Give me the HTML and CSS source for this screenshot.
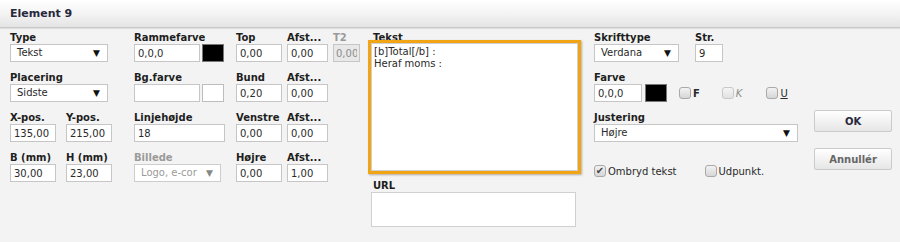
FILE: index.html
```html
<!DOCTYPE html>
<html lang="da">
<head>
  <meta charset="UTF-8">
  <title>Element 9</title>
  <link rel="stylesheet" href="styles.css">
</head>
<body>
  <div class="titlebar">Element 9</div>

  <div class="content">
    <div class="fields">
      <div class="field span2">
        <label>Type</label>
        <div class="select w97"><span>Tekst</span></div>
      </div>
      <div class="field">
        <label>Rammefarve</label>
        <div class="color-row">
          <input class="inp w66" type="text" value="0,0,0">
          <span class="swatch black"></span>
        </div>
      </div>
      <div class="field">
        <label>Top</label>
        <input class="inp w45" type="text" value="0,00">
      </div>
      <div class="field">
        <label>Afst...</label>
        <input class="inp w40" type="text" value="0,00">
      </div>
      <div class="field">
        <label class="muted">T2</label>
        <input class="inp w27 disabled" type="text" value="0,00" disabled>
      </div>

      <div class="field span2">
        <label>Placering</label>
        <div class="select w97"><span>Sidste</span></div>
      </div>
      <div class="field">
        <label>Bg.farve</label>
        <div class="color-row">
          <input class="inp w66" type="text" value="">
          <span class="swatch white"></span>
        </div>
      </div>
      <div class="field">
        <label>Bund</label>
        <input class="inp w45" type="text" value="0,20">
      </div>
      <div class="field span2">
        <label>Afst...</label>
        <input class="inp w40" type="text" value="0,00">
      </div>

      <div class="field">
        <label>X-pos.</label>
        <input class="inp w46" type="text" value="135,00">
      </div>
      <div class="field">
        <label>Y-pos.</label>
        <input class="inp w46" type="text" value="215,00">
      </div>
      <div class="field">
        <label>Linjehøjde</label>
        <input class="inp w90" type="text" value="18">
      </div>
      <div class="field">
        <label>Venstre</label>
        <input class="inp w45" type="text" value="0,00">
      </div>
      <div class="field span2">
        <label>Afst...</label>
        <input class="inp w40" type="text" value="0,00">
      </div>

      <div class="field">
        <label>B (mm)</label>
        <input class="inp w46" type="text" value="30,00">
      </div>
      <div class="field">
        <label>H (mm)</label>
        <input class="inp w46" type="text" value="23,00">
      </div>
      <div class="field">
        <label class="muted">Billede</label>
        <div class="select w86 disabled"><span>Logo, e-cor</span></div>
      </div>
      <div class="field">
        <label>Højre</label>
        <input class="inp w45" type="text" value="0,00">
      </div>
      <div class="field span2">
        <label>Afst...</label>
        <input class="inp w40" type="text" value="1,00">
      </div>
    </div>

    <div class="text-col">
      <label>Tekst</label>
      <textarea class="tekst">[b]Total[/b] :
Heraf moms :</textarea>
      <label class="url-label">URL</label>
      <input class="inp url" type="text" value="">
    </div>

    <div class="font-col">
      <div class="font-row">
        <div class="field">
          <label>Skrifttype</label>
          <div class="select w85"><span>Verdana</span></div>
        </div>
        <div class="field">
          <label>Str.</label>
          <input class="inp w28" type="text" value="9">
        </div>
      </div>

      <div class="field">
        <label>Farve</label>
        <div class="color-row">
          <input class="inp w48" type="text" value="0,0,0">
          <span class="swatch black wide"></span>
          <span class="check bold"><span class="box"></span>F</span>
          <span class="check italic"><span class="box off"></span>K</span>
          <span class="check"><span class="box"></span><u>U</u></span>
        </div>
      </div>

      <div class="field">
        <label>Justering</label>
        <div class="select w204"><span>Højre</span></div>
      </div>

      <div class="wrap-row">
        <span class="check"><span class="box checked">&#10004;</span>Ombryd tekst</span>
        <span class="check"><span class="box"></span>Udpunkt.</span>
      </div>
    </div>

    <div class="buttons">
      <button class="btn ok">OK</button>
      <button class="btn cancel">Annullér</button>
    </div>
  </div>
</body>
</html>
```

FILE: styles.css
```css
body {
  margin: 0;
  background-color: #f3f3f3;
  font-family: "DejaVu Sans", Verdana, sans-serif;
  font-size: 10px;
  color: #1e1e1e;
}
.titlebar {
  height: 27px;
  line-height: 27px;
  padding-left: 10px;
  font-size: 11px;
  font-weight: bold;
  color: #28283c;
  background: linear-gradient(#ffffff, #f4f4f4 50%, #e4e4e4);
  border-bottom: 1px solid #c9c9c9;
  box-shadow: 0 1px 1px rgba(0, 0, 0, 0.08);
}
.content {
  display: flex;
  align-items: flex-start;
  padding: 3px 0 0 10px;
}
label {
  display: block;
  height: 13px;
  line-height: 13px;
  font-weight: bold;
  color: #1e1e1e;
  white-space: nowrap;
}
label.muted {
  color: #9a9a9a;
}
.fields {
  display: grid;
  grid-template-columns: 56px 68px 102px 51px 46px 29px;
  grid-auto-rows: 31px;
  row-gap: 9px;
  width: 352px;
}
.span2 {
  grid-column: span 2;
}
.field {
  display: flex;
  flex-direction: column;
}
.inp {
  box-sizing: border-box;
  flex-shrink: 0;
  height: 18px;
  margin: 0;
  padding: 0 3px;
  border: 1px solid #c6c6c6;
  background: #fff;
  font-family: "DejaVu Sans", Verdana, sans-serif;
  font-size: 10px;
  color: #2a2a2a;
  outline: none;
}
.inp.disabled {
  background: #e8e8e8;
  color: #8c8c8c;
}
.w27 { width: 27px; padding: 0 2px; }
.w28 { width: 28px; }
.w40 { width: 41px; }
.w45 { width: 46px; }
.w46 { width: 46px; }
.w48 { width: 48px; }
.w66 { width: 66px; }
.w85 { width: 85px; }
.w86 { width: 87px; }
.w90 { width: 91px; }
.w97 { width: 98px; }
.w204 { width: 204px; }
.select {
  position: relative;
  box-sizing: border-box;
  height: 18px;
  line-height: 16px;
  padding-left: 6px;
  border: 1px solid #c6c6c6;
  background: #fff;
  color: #2a2a2a;
}
.select::after {
  content: "\25BC";
  position: absolute;
  right: 7px;
  top: 0;
  font-size: 9px;
  color: #111;
}
.select.disabled {
  color: #9a9a9a;
  border-color: #cdcdcd;
}
.select.disabled::after {
  color: #888;
}
.color-row {
  display: flex;
  align-items: center;
}
.swatch {
  box-sizing: border-box;
  flex-shrink: 0;
  width: 22px;
  height: 18px;
  margin-left: 2px;
  border: 1px solid #bdbdbd;
}
.swatch.black {
  background: #000;
  border-color: #777;
}
.swatch.white {
  background: #fff;
}
.swatch.wide {
  margin-left: 3px;
  margin-right: 12px;
}
.text-col {
  width: 207px;
  margin-left: 9px;
}
.text-col label {
  padding-left: 2px;
}
.tekst {
  position: relative;
  display: block;
  box-sizing: border-box;
  width: 207px;
  height: 128px;
  margin: -1px 0 9px;
  padding: 2px 2px;
  border: 1px solid #cfcfcf;
  background: #fff;
  box-shadow: 0 0 0 3px #f2a514, 1px 1px 2px 3px rgba(60, 40, 0, 0.35);
  font-family: "DejaVu Sans", Verdana, sans-serif;
  font-size: 10px;
  line-height: 12px;
  color: #2a2a2a;
  resize: none;
  outline: none;
}
.url-label {
  margin-top: -1px;
}
.url {
  display: block;
  width: 205px;
  height: 35px;
  border-color: #d0d0d0;
}
.font-col {
  display: flex;
  flex-direction: column;
  gap: 9px;
  width: 204px;
  margin-left: 16px;
}
.font-row {
  display: flex;
  gap: 16px;
}
.check {
  display: flex;
  flex-shrink: 0;
  align-items: center;
  margin-right: 23px;
  color: #2a2a2a;
}
.check.bold {
  font-weight: bold;
  margin-right: 22px;
}
.check.italic {
  font-style: italic;
  color: #8a8a8a;
  margin-right: 24px;
}
.box {
  box-sizing: border-box;
  display: inline-block;
  flex-shrink: 0;
  width: 12px;
  height: 12px;
  margin-right: 2px;
  border: 1px solid #a9a9a9;
  border-radius: 3px;
  background: linear-gradient(#f2f2f2, #d6d6d6);
  font-size: 10px;
  line-height: 10px;
  text-align: center;
  color: #444;
}
.box.off {
  border-color: #c8c8c8;
  background: linear-gradient(#f4f4f4, #e2e2e2);
}
.wrap-row {
  display: flex;
  align-items: center;
  padding-top: 11px;
  height: 18px;
}
.wrap-row .check {
  margin-right: 28px;
}
.buttons {
  display: flex;
  flex-direction: column;
  gap: 16px;
  margin-left: 16px;
  padding-top: 79px;
}
.btn {
  width: 78px;
  height: 22px;
  padding: 0;
  border: 1px solid #cbcbcb;
  border-radius: 2px;
  background: linear-gradient(#ffffff, #e6e6e6);
  font-family: "DejaVu Sans", Verdana, sans-serif;
  font-size: 10px;
  font-weight: bold;
  cursor: pointer;
}
.btn.ok {
  color: #28283c;
}
.btn.cancel {
  color: #666;
}
```
